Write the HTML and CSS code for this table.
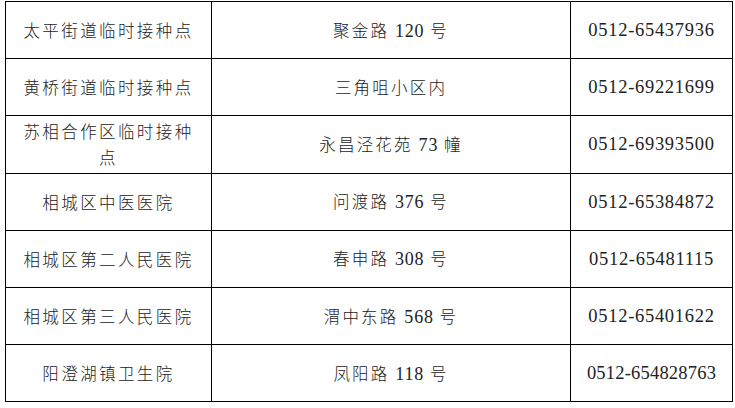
FILE: index.html
```html
<!DOCTYPE html>
<html lang="zh-CN">
<head>
<meta charset="utf-8">
<title>临时接种点</title>
<link rel="stylesheet" href="styles.css">
</head>
<body>
<table class="sites">
  <colgroup>
    <col class="c-name">
    <col class="c-addr">
    <col class="c-tel">
  </colgroup>
  <tbody>
    <tr><td class="name">太平街道临时接种点</td><td class="addr">聚金路 <span class="num">120</span> 号</td><td class="tel">0512-65437936</td></tr>
    <tr><td class="name">黄桥街道临时接种点</td><td class="addr">三角咀小区内</td><td class="tel">0512-69221699</td></tr>
    <tr><td class="name">苏相合作区临时接种点</td><td class="addr">永昌泾花苑 <span class="num">73</span> 幢</td><td class="tel">0512-69393500</td></tr>
    <tr><td class="name">相城区中医医院</td><td class="addr">问渡路 <span class="num">376</span> 号</td><td class="tel">0512-65384872</td></tr>
    <tr><td class="name">相城区第二人民医院</td><td class="addr">春申路 <span class="num">308</span> 号</td><td class="tel">0512-65481115</td></tr>
    <tr><td class="name">相城区第三人民医院</td><td class="addr">渭中东路 <span class="num">568</span> 号</td><td class="tel">0512-65401622</td></tr>
    <tr><td class="name">阳澄湖镇卫生院</td><td class="addr">凤阳路 <span class="num">118</span> 号</td><td class="tel tel-long">0512-654828763</td></tr>
  </tbody>
</table>
</body>
</html>
```
FILE: styles.css
```css
html, body {
  margin: 0;
  padding: 0;
  background: #ffffff;
}

.sites {
  margin: 1px 0 0 5px;
  width: 727px;
  border-collapse: collapse;
  table-layout: fixed;
  color: #222222;
  font-family: "Noto Sans CJK SC", "Liberation Serif", sans-serif;
  font-size: 16.5px;
}

.c-name { width: 206px; }
.c-addr { width: 359px; }
.c-tel { width: 162px; }

.sites tr {
  height: 57.2px;
}

.sites td {
  border: 1px solid #000000;
  text-align: center;
  vertical-align: middle;
  padding: 0 12px;
  line-height: 26px;
}

.name {
  letter-spacing: 2.4px;
  font-weight: 300;
}

.addr {
  letter-spacing: 2.2px;
  font-weight: 300;
}

.num {
  font-family: "Liberation Serif", serif;
  font-size: 18px;
  letter-spacing: 0.8px;
}

.tel {
  font-family: "Liberation Serif", serif;
  font-size: 18.5px;
  letter-spacing: 0.7px;
  padding: 0 4px;
}

.tel-long {
  letter-spacing: 0.2px;
}
```
